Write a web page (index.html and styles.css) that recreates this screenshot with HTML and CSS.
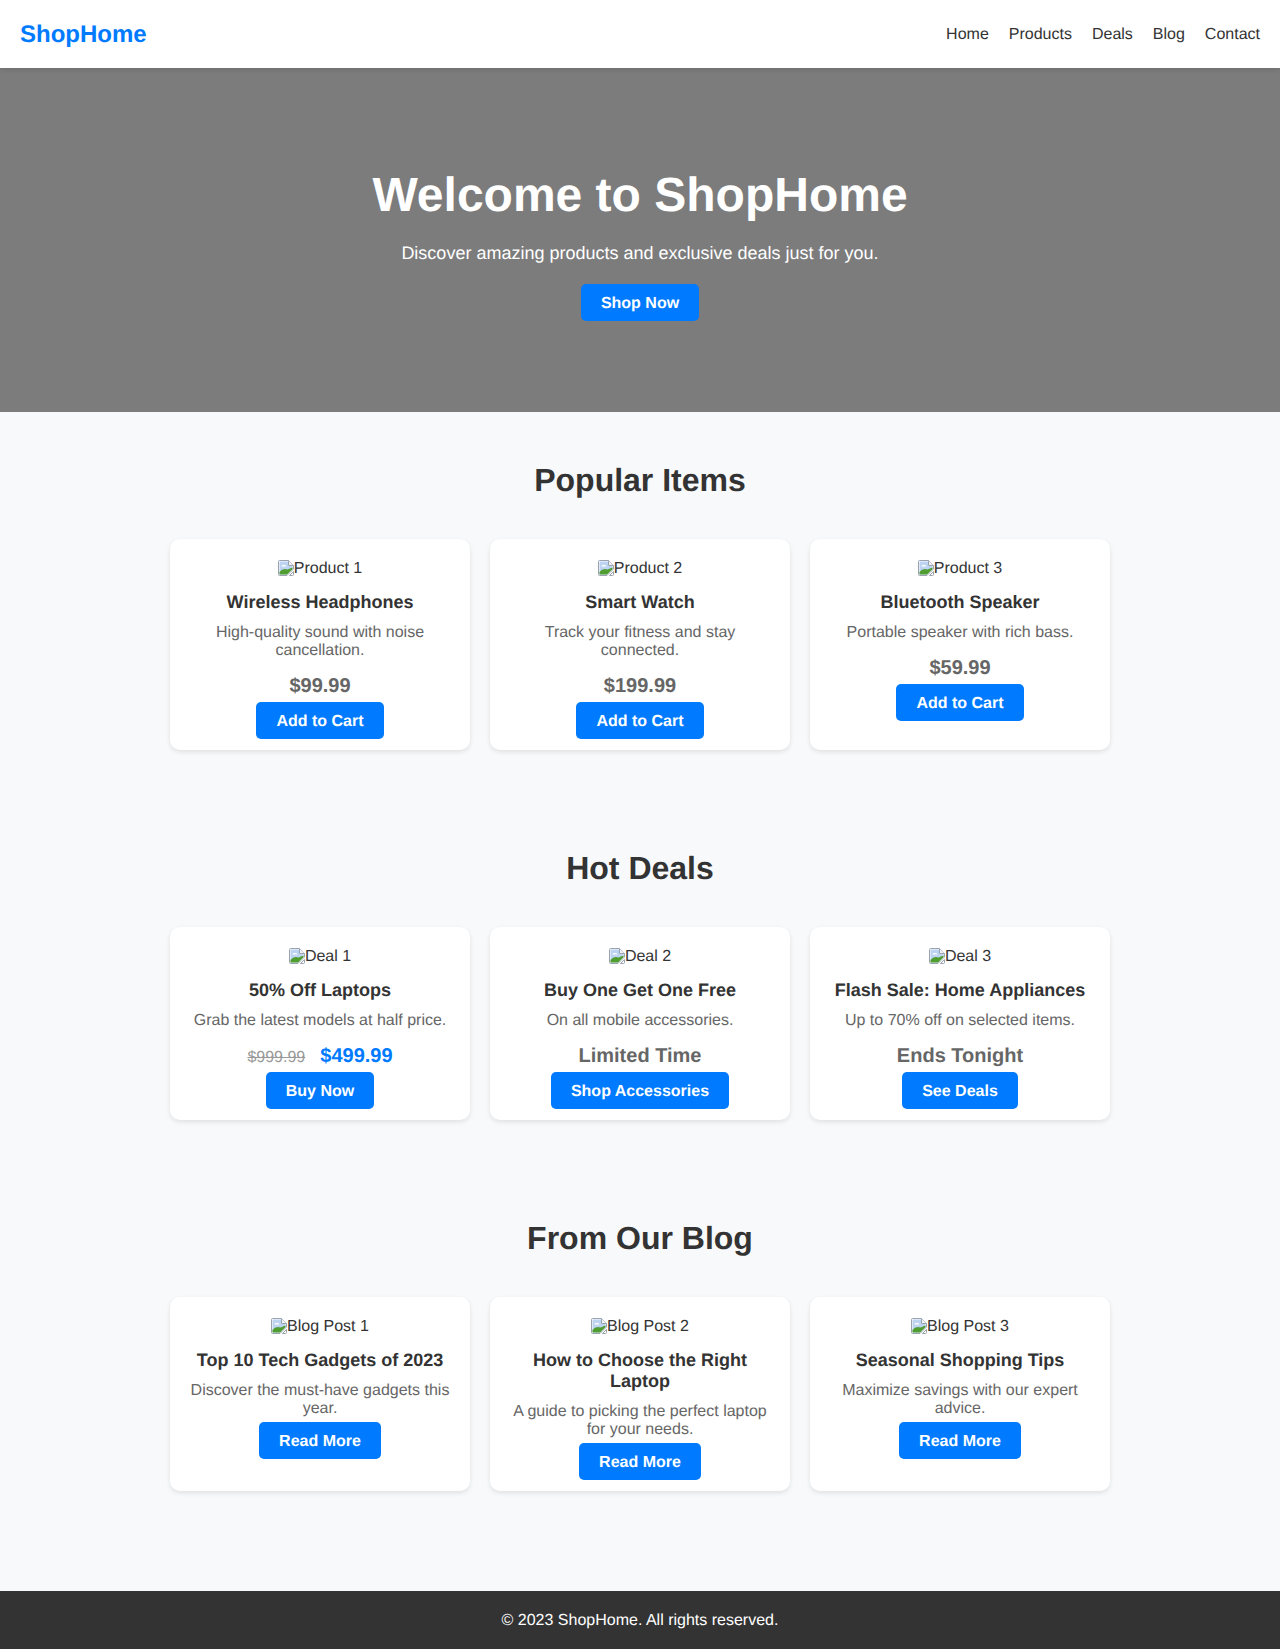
FILE: index.html
```html
<!DOCTYPE html>
<html>
<head>
    <title>ShopHome</title>
    <link rel="stylesheet" href="styles.css">
</head>
<body>
    <svg class="sprite" width="0" height="0">
        <symbol id="broken-image" viewBox="0 0 16 16">
            <path d="M1.5 .5H10.5L15.5 5.5V9L12 12.5L9 15.5H1.5A1 1 0 0 1 .5 14.5V1.5A1 1 0 0 1 1.5 .5Z" fill="#fff" stroke="#9aa3b0"/>
            <path d="M1.5 1.5H10V6H14.5V9L9 14.5H1.5Z" fill="#bcd3f2"/>
            <path d="M3.5 6.5Q4 4 6 5Q8 4.5 8.5 6.5Z" fill="#fff"/>
            <path d="M1.5 14.5V12Q5 7.5 9.5 9.5L14.5 7.5V9L9 14.5Z" fill="#4f9e2f"/>
            <path d="M11.5 15.5L15.5 11.5V14.5A1 1 0 0 1 14.5 15.5Z" fill="#fff" stroke="#9aa3b0"/>
            <path d="M10.5 .5V5.5H15.5" fill="#eef0f4" stroke="#9aa3b0"/>
        </symbol>
    </svg>

    <header class="site-header">
        <a class="logo" href="#">ShopHome</a>
        <nav class="main-nav">
            <a href="#">Home</a>
            <a href="#">Products</a>
            <a href="#">Deals</a>
            <a href="#">Blog</a>
            <a href="#">Contact</a>
        </nav>
    </header>

    <section class="hero">
        <h1>Welcome to ShopHome</h1>
        <p>Discover amazing products and exclusive deals just for you.</p>
        <a class="btn" href="#">Shop Now</a>
    </section>

    <section class="section">
        <h2>Popular Items</h2>
        <div class="card-grid">
            <div class="card">
                <span class="img-alt"><svg class="broken"><use href="#broken-image"/></svg>Product 1</span>
                <h3>Wireless Headphones</h3>
                <p>High-quality sound with noise cancellation.</p>
                <div class="price">$99.99</div>
                <a class="btn" href="#">Add to Cart</a>
            </div>
            <div class="card">
                <span class="img-alt"><svg class="broken"><use href="#broken-image"/></svg>Product 2</span>
                <h3>Smart Watch</h3>
                <p>Track your fitness and stay connected.</p>
                <div class="price">$199.99</div>
                <a class="btn" href="#">Add to Cart</a>
            </div>
            <div class="card">
                <span class="img-alt"><svg class="broken"><use href="#broken-image"/></svg>Product 3</span>
                <h3>Bluetooth Speaker</h3>
                <p>Portable speaker with rich bass.</p>
                <div class="price">$59.99</div>
                <a class="btn" href="#">Add to Cart</a>
            </div>
        </div>
    </section>

    <section class="section">
        <h2>Hot Deals</h2>
        <div class="card-grid">
            <div class="card">
                <span class="img-alt"><svg class="broken"><use href="#broken-image"/></svg>Deal 1</span>
                <h3>50% Off Laptops</h3>
                <p>Grab the latest models at half price.</p>
                <div class="price"><span class="old-price">$999.99</span><span class="new-price">$499.99</span></div>
                <a class="btn" href="#">Buy Now</a>
            </div>
            <div class="card">
                <span class="img-alt"><svg class="broken"><use href="#broken-image"/></svg>Deal 2</span>
                <h3>Buy One Get One Free</h3>
                <p>On all mobile accessories.</p>
                <div class="price">Limited Time</div>
                <a class="btn" href="#">Shop Accessories</a>
            </div>
            <div class="card">
                <span class="img-alt"><svg class="broken"><use href="#broken-image"/></svg>Deal 3</span>
                <h3>Flash Sale: Home Appliances</h3>
                <p>Up to 70% off on selected items.</p>
                <div class="price">Ends Tonight</div>
                <a class="btn" href="#">See Deals</a>
            </div>
        </div>
    </section>

    <section class="section">
        <h2>From Our Blog</h2>
        <div class="card-grid">
            <div class="card">
                <span class="img-alt"><svg class="broken"><use href="#broken-image"/></svg>Blog Post 1</span>
                <h3>Top 10 Tech Gadgets of 2023</h3>
                <p>Discover the must-have gadgets this year.</p>
                <a class="btn" href="#">Read More</a>
            </div>
            <div class="card">
                <span class="img-alt"><svg class="broken"><use href="#broken-image"/></svg>Blog Post 2</span>
                <h3>How to Choose the Right Laptop</h3>
                <p>A guide to picking the perfect laptop for your needs.</p>
                <a class="btn" href="#">Read More</a>
            </div>
            <div class="card">
                <span class="img-alt"><svg class="broken"><use href="#broken-image"/></svg>Blog Post 3</span>
                <h3>Seasonal Shopping Tips</h3>
                <p>Maximize savings with our expert advice.</p>
                <a class="btn" href="#">Read More</a>
            </div>
        </div>
    </section>

    <footer class="site-footer">© 2023 ShopHome. All rights reserved.</footer>
</body>
</html>
```

FILE: styles.css
```css
body {
    margin: 0;
    font-family: "Liberation Sans", Arial, sans-serif;
    text-rendering: geometricPrecision;
    background-color: #f8f9fa;
    color: #333;
}

a {
    text-decoration: none;
}

.sprite {
    display: block;
    height: 0;
}

.site-header {
    display: flex;
    align-items: center;
    justify-content: space-between;
    box-sizing: border-box;
    height: 68px;
    padding: 2px 20px 0;
    background-color: #fff;
    box-shadow: 0 2px 5px rgba(0, 0, 0, 0.1);
    position: relative;
}

.logo {
    font-size: 24px;
    font-weight: bold;
    color: #007bff;
}

.main-nav {
    display: flex;
    gap: 20px;
}

.main-nav a {
    font-size: 16px;
    color: #333;
}

.hero {
    height: 344px;
    padding: 100px 20px 0;
    box-sizing: border-box;
    background-color: #7c7c7c;
    color: #fff;
    text-align: center;
}

.hero h1 {
    margin: 0 0 20px;
    font-size: 48px;
    line-height: 55px;
}

.hero p {
    margin: 0 0 20px;
    font-size: 18px;
    line-height: 21px;
}

.btn {
    display: block;
    width: fit-content;
    margin: 0 auto;
    padding: 11px 20px 9px;
    background-color: #007bff;
    color: #fff;
    font-size: 16px;
    line-height: 17px;
    font-weight: bold;
    border-radius: 5px;
}

.section {
    padding: 50px 0;
}

.section h2 {
    margin: 0 0 40px;
    font-size: 32px;
    line-height: 37px;
    text-align: center;
}

.card-grid {
    display: grid;
    grid-template-columns: repeat(3, 300px);
    gap: 20px;
    justify-content: center;
}

.card {
    padding: 20px 15px 11px;
    background-color: #fff;
    border-radius: 10px;
    box-shadow: 0 2px 5px rgba(0, 0, 0, 0.1);
    text-align: center;
}

.img-alt {
    display: block;
    height: 18px;
    line-height: 20px;
    font-size: 16px;
}

.broken {
    width: 16px;
    height: 16px;
    vertical-align: -3px;
}

.card h3 {
    margin: 15px 0 11px;
    font-size: 18px;
    line-height: 21px;
}

.card p {
    margin: 0 0 4px;
    font-size: 16px;
    line-height: 18px;
    color: #666;
}

.price {
    margin-top: 15px;
    margin-bottom: 4px;
    font-size: 20px;
    line-height: 23px;
    font-weight: bold;
    color: #666;
}

.old-price {
    margin-right: 15px;
    font-size: 16px;
    line-height: 1;
    font-weight: normal;
    color: #999;
    text-decoration: line-through;
}

.new-price {
    color: #007bff;
}

.site-footer {
    margin-top: 50px;
    padding: 21px 20px 19px;
    background-color: #333;
    color: #fff;
    font-size: 16px;
    line-height: 18px;
    text-align: center;
}
```
